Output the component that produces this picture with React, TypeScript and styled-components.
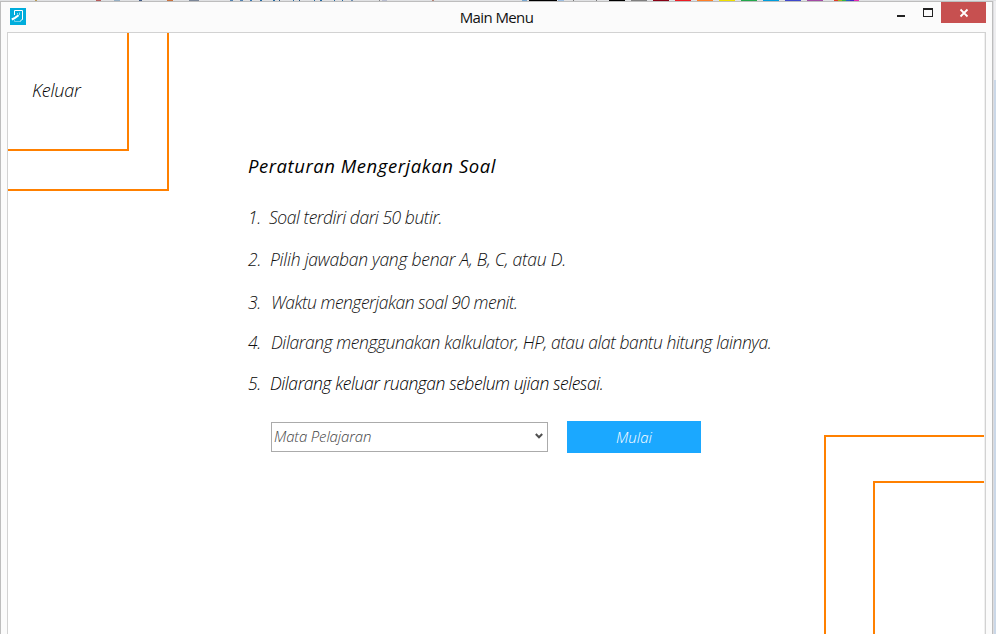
import React from 'react';
import styled, { createGlobalStyle } from 'styled-components';

const GlobalStyle = createGlobalStyle`
  * { box-sizing: border-box; }
  html, body { margin: 0; padding: 0; }
  body { overflow: hidden; background: #eeeef0; font-family: "Open Sans", "Noto Sans", sans-serif; }
`;

const Desktop = styled.div`
  width: 996px;
  height: 634px;
  overflow: hidden;
  display: grid;
  grid-template-rows: 1px 633px;
  grid-template-columns: 993px 3px;
`;

const Ribbon = styled.svg`
  grid-column: 1 / 3;
  display: block;
  width: 996px;
  height: 1px;
`;

const Backdrop = styled.div`
  background: linear-gradient(#eeeef0 79px, #cbd8e8 79px);
  border-left: 1px solid #dddde0;
`;

const Window = styled.div`
  display: flex;
  flex-direction: column;
  border: 1px solid #bdbdbd;
  border-bottom: 0;
  background: #fbfbfb;
`;

const TitleBar = styled.header`
  display: grid;
  grid-template-columns: 200px 1fr 200px;
  height: 30px;
  flex: none;
`;

const AppIcon = styled.svg`
  margin: 6px 0 0 9px;
  width: 16px;
  height: 17px;
`;

const Title = styled.h1`
  margin: 0;
  text-align: center;
  font: 400 15px/31px "Open Sans", sans-serif;
  letter-spacing: -0.6px;
  color: #111;
`;

const WindowControls = styled.div`
  display: flex;
  justify-content: flex-end;
  padding-right: 6px;
`;

const ControlButton = styled.button<{ $w: number; $close?: boolean }>`
  width: ${p => p.$w}px;
  height: 21px;
  padding: 0;
  border: 0;
  background: ${p => (p.$close ? '#c75050' : 'transparent')};
  svg { display: block; }
`;

const Client = styled.main`
  position: relative;
  flex: 1;
  margin: 0 6px;
  border: 1px solid #d2d2d2;
  border-bottom: 0;
  background: #fff;
  box-shadow: inset -1px 0 #f0f0f0;
  overflow: hidden;
`;

const Corner = styled.div<{ $w: number; $h: number; $end?: boolean }>`
  position: absolute;
  width: ${p => p.$w}px;
  height: ${p => p.$h}px;
  border: 0 solid #ff8000;
  ${p => (p.$end ? 'right: 1px; bottom: 0; border-width: 2px 0 0 2px;' : 'left: 0; top: 0; border-width: 0 2px 2px 0;')}
`;

const ExitButton = styled.button`
  position: absolute;
  left: 24px;
  top: 44px;
  padding: 0;
  border: 0;
  background: none;
  font: italic 300 18px/26px "Open Sans", sans-serif;
  letter-spacing: -0.2px;
  color: #000;
`;

const Content = styled.section`
  padding: 119px 0 0 240px;
`;

const Heading = styled.h2`
  margin: 0 0 24px;
  font: italic 500 18.5px/28px "Open Sans", sans-serif;
  letter-spacing: 0.54px;
  color: #000;
`;

const Rules = styled.ol`
  margin: 0;
  padding: 0;
  list-style: none;
`;

const Rule = styled.li<{ $h: number; $indent: number; $track: number; $ink: string }>`
  display: grid;
  grid-template-columns: ${p => p.$indent}px 1fr;
  height: ${p => p.$h}px;
  font: italic 300 17.5px/26px "Open Sans", sans-serif;
  letter-spacing: ${p => p.$track}px;
  color: ${p => p.$ink};
  white-space: nowrap;
`;

const Actions = styled.div`
  display: flex;
  gap: 19px;
  margin-left: 23px;
`;

const SubjectSelect = styled.button`
  display: flex;
  align-items: center;
  justify-content: space-between;
  width: 277px;
  height: 30px;
  margin-top: 1px;
  padding: 0 4px 2px 2px;
  border: 1px solid #ababab;
  background: #fff;
  font: italic 300 15px/26px "Open Sans", sans-serif;
  letter-spacing: -0.15px;
  color: #444;
`;

const StartButton = styled.button`
  width: 134px;
  height: 32px;
  padding: 0;
  border: 0;
  background: #1ba8ff;
  font: italic 300 15px/32px "Open Sans", sans-serif;
  color: #fff;
`;

const swatches: [number, number, string][] = [
  [35, 2, '#b79a55'], [96, 5, '#b65b5b'], [114, 6, '#95afc4'], [139, 3, '#425b86'],
  [167, 6, '#c9733f'], [189, 10, '#7c8798'], [230, 3, '#5382b0'], [240, 3, '#5382b0'],
  [250, 2, '#3676b2'], [260, 2, '#2468a0'], [273, 2, '#2468a0'], [279, 1, '#224f7b'],
  [293, 1, '#2468a0'], [299, 1, '#224f7b'], [314, 1, '#2468a0'], [320, 2, '#2468a0'],
  [334, 1, '#2468a0'], [342, 1, '#2468a0'], [351, 2, '#6e8eb0'], [379, 1, '#888888'],
  [382, 5, '#b7bbce'], [432, 2, '#b48476'], [522, 5, '#78a7d0'], [529, 28, '#000000'],
  [558, 6, '#9cbde0'], [573, 1, '#777777'], [596, 1, '#777777'], [609, 16, '#000000'],
  [631, 16, '#7f7f7f'], [653, 16, '#880015'], [675, 16, '#ed1c24'], [697, 16, '#ff7f27'],
  [719, 16, '#efe000'], [741, 16, '#22a84b'], [763, 16, '#009ddc'], [785, 16, '#3f48cc'],
  [807, 16, '#a349a4'], [834, 4, '#e23b27'], [838, 4, '#a6b31e'], [842, 4, '#32b44a'],
  [846, 4, '#2361c5'], [850, 4, '#4526c2'], [854, 5, '#e52bb2'],
];

const rules = [
  { text: 'Soal terdiri dari 50 butir.', h: 42, indent: 21, track: -0.46, ink: '#111' },
  { text: 'Pilih jawaban yang benar A, B, C, atau D.', h: 43, indent: 22, track: -0.24, ink: '#111' },
  { text: 'Waktu mengerjakan soal 90 menit.', h: 40, indent: 23, track: -0.49, ink: '#111' },
  { text: 'Dilarang menggunakan kalkulator, HP, atau alat bantu hitung lainnya.', h: 41, indent: 23, track: -0.425, ink: '#111' },
  { text: 'Dilarang keluar ruangan sebelum ujian selesai.', h: 51, indent: 22, track: -0.44, ink: '#000' },
];

export default function App() {
  return (
    <>
      <GlobalStyle />
      <Desktop>
        <Ribbon viewBox="0 0 996 1" shapeRendering="crispEdges">
          <rect width="996" height="1" fill="#e0e1e3" />
          {swatches.map(([x, w, c]) => <rect key={x} x={x} width={w} height="1" fill={c} />)}
        </Ribbon>
        <Window>
          <TitleBar>
            <AppIcon viewBox="0 0 16 17" aria-hidden="true">
              <rect width="16" height="17" fill="#00addc" />
              <path d="M4.5 7V2.5h8v9" fill="none" stroke="#fff" />
              <path d="M12.5 11L9.5 14" fill="none" stroke="#fff" />
              <path d="M4.5 12v1.5h5" fill="none" stroke="#6fd0ea" />
              <path d="M1.8 11.5L5 9.8 8.6 7.3" fill="none" stroke="#fff" strokeWidth="2" />
              <path d="M9.5 4.5v2.5M7.5 5v1.5" fill="none" stroke="#8edcf0" />
            </AppIcon>
            <Title>Main Menu</Title>
            <WindowControls>
              <ControlButton $w={27} aria-label="Minimize">
                <svg width="27" height="21"><path d="M10 14h8" stroke="#222" strokeWidth="2" /></svg>
              </ControlButton>
              <ControlButton $w={27} aria-label="Maximize">
                <svg width="27" height="21" shapeRendering="crispEdges"><path fillRule="evenodd" fill="#222" d="M9 6h10v9H9zM10 8v6h8V8z" /></svg>
              </ControlButton>
              <ControlButton $w={45} $close aria-label="Close">
                <svg width="45" height="21"><path d="M19.5 7.5l7 7M26.5 7.5l-7 7" stroke="#fff" strokeWidth="1.8" /></svg>
              </ControlButton>
            </WindowControls>
          </TitleBar>
          <Client>
            <Corner $w={161} $h={158} />
            <Corner $w={121} $h={118} />
            <Corner $w={160} $h={199} $end />
            <Corner $w={111} $h={153} $end />
            <ExitButton>Keluar</ExitButton>
            <Content>
              <Heading>Peraturan Mengerjakan Soal</Heading>
              <Rules>
                {rules.map((r, i) => (
                  <Rule key={r.text} $h={r.h} $indent={r.indent} $track={r.track} $ink={r.ink}>
                    <span>{i + 1}.</span>
                    <span>{r.text}</span>
                  </Rule>
                ))}
              </Rules>
              <Actions>
                <SubjectSelect>
                  <span>Mata Pelajaran</span>
                  <svg width="8" height="6"><path d="M.8 1L4 4.3 7.2 1" fill="none" stroke="#505050" strokeWidth="2" /></svg>
                </SubjectSelect>
                <StartButton>Mulai</StartButton>
              </Actions>
            </Content>
          </Client>
        </Window>
        <Backdrop />
      </Desktop>
    </>
  );
}
